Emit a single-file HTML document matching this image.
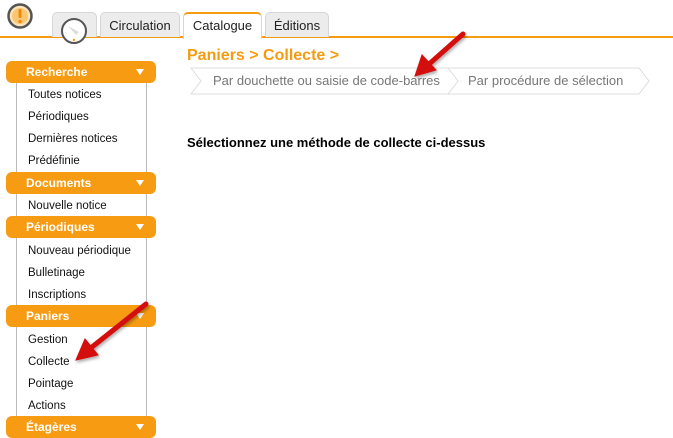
<!DOCTYPE html>
<html><head><meta charset="utf-8"><style>
*{margin:0;padding:0;box-sizing:border-box}
body{width:673px;height:427px;overflow:hidden;background:#fff;font-family:"Liberation Sans",sans-serif;position:relative}
.a{position:absolute}
.line{left:0;top:36px;width:673px;height:2px;background:#f59b12}
.tab{top:12px;height:25px;background:#ececec;border:1px solid #d6d6d6;border-bottom:none;border-radius:5px 5px 0 0;font-size:13px;color:#222;text-align:center;line-height:25px}
.tab.sel{background:#fff;border-top:2px solid #f59b12;height:27px;line-height:24px}
.hd{left:6px;width:150px;height:22px;background:#f79c12;border-radius:6px;color:#fff;font-weight:bold;font-size:12px;line-height:22px;padding-left:20px}
.hd:after{content:"";position:absolute;right:12px;top:8px;border-left:4px solid transparent;border-right:4px solid transparent;border-top:6px solid #fff}
.box{left:16px;width:131px;border-left:1px solid #bbb;border-right:1px solid #bbb;background:#fff}
.it{left:28px;font-size:11.5px;color:#111;line-height:14px}
.step{top:68px;height:26px;font-size:13px;color:#777;line-height:26px}
</style></head><body>
<div class="a line"></div>
<svg class="a" style="left:6px;top:2px" width="28" height="28"><circle cx="14" cy="14" r="11.5" fill="#fde3b8" stroke="#555" stroke-width="2.5"/><circle cx="14" cy="14" r="8" fill="#fbc673"/><rect x="12.5" y="7" width="3" height="9" rx="1.5" fill="#f28a00"/><circle cx="14" cy="19.5" r="1.6" fill="#f28a00"/></svg>
<div class="a tab" style="left:52px;width:45px"></div>
<svg class="a" style="left:60px;top:17px" width="28" height="28"><circle cx="14" cy="14" r="12" fill="#fff" stroke="#555" stroke-width="2"/><path d="M8 9 L16 18 L19 15 Z" fill="#ddd"/><circle cx="14" cy="23" r="1.2" fill="#f59b12"/></svg>
<div class="a tab" style="left:100px;width:80px">Circulation</div>
<div class="a tab sel" style="left:183px;width:79px">Catalogue</div>
<div class="a tab" style="left:265px;width:64px">Éditions</div>

<div class="a box" style="top:83px;height:344px"></div>
<div class="a hd" style="top:61px">Recherche</div>
<div class="a it" style="top:88px">Toutes notices</div>
<div class="a it" style="top:110px">Périodiques</div>
<div class="a it" style="top:132px">Dernières notices</div>
<div class="a it" style="top:154px">Prédéfinie</div>
<div class="a hd" style="top:172px">Documents</div>
<div class="a it" style="top:199px">Nouvelle notice</div>
<div class="a hd" style="top:216px">Périodiques</div>
<div class="a it" style="top:244px">Nouveau périodique</div>
<div class="a it" style="top:266px">Bulletinage</div>
<div class="a it" style="top:288px">Inscriptions</div>
<div class="a hd" style="top:305px">Paniers</div>
<div class="a it" style="top:333px">Gestion</div>
<div class="a it" style="top:355px">Collecte</div>
<div class="a it" style="top:377px">Pointage</div>
<div class="a it" style="top:399px">Actions</div>
<div class="a hd" style="top:416px">Étagères</div>

<div class="a" style="left:187px;top:47px;font-size:16px;font-weight:bold;color:#f59b12">Paniers &gt; Collecte &gt;</div>
<svg class="a" style="left:190px;top:67px" width="460" height="28"><path d="M1 1 H258 L268 14 L258 27 H1 L11 14 Z" fill="#fff" stroke="#ddd"/><path d="M258 1 H451 L461 14 L451 27 H258" fill="none" stroke="#ddd" transform="translate(-2 0)"/></svg>
<div class="a step" style="left:213px;top:68px">Par douchette ou saisie de code-barres</div>
<div class="a step" style="left:468px">Par procédure de sélection</div>
<div class="a" style="left:187px;top:135px;font-size:13px;font-weight:bold;color:#000">Sélectionnez une méthode de collecte ci-dessus</div>

<svg class="a" style="left:0;top:0" width="673" height="427"><defs><filter id="s"><feDropShadow dx="1" dy="2" stdDeviation="1.5" flood-opacity="0.35"/></filter></defs>
<g filter="url(#s)" fill="#d40d0d" stroke="#d40d0d">
<line x1="463" y1="34" x2="428" y2="65" stroke-width="5" stroke-linecap="round"/>
<path d="M415 76 L422 55 L436 70 Z" stroke-width="1"/>
<line x1="146" y1="304" x2="92" y2="347" stroke-width="5" stroke-linecap="round"/>
<path d="M76 360 L85 339 L98 355 Z" stroke-width="1"/>
</g></svg>
</body></html>
